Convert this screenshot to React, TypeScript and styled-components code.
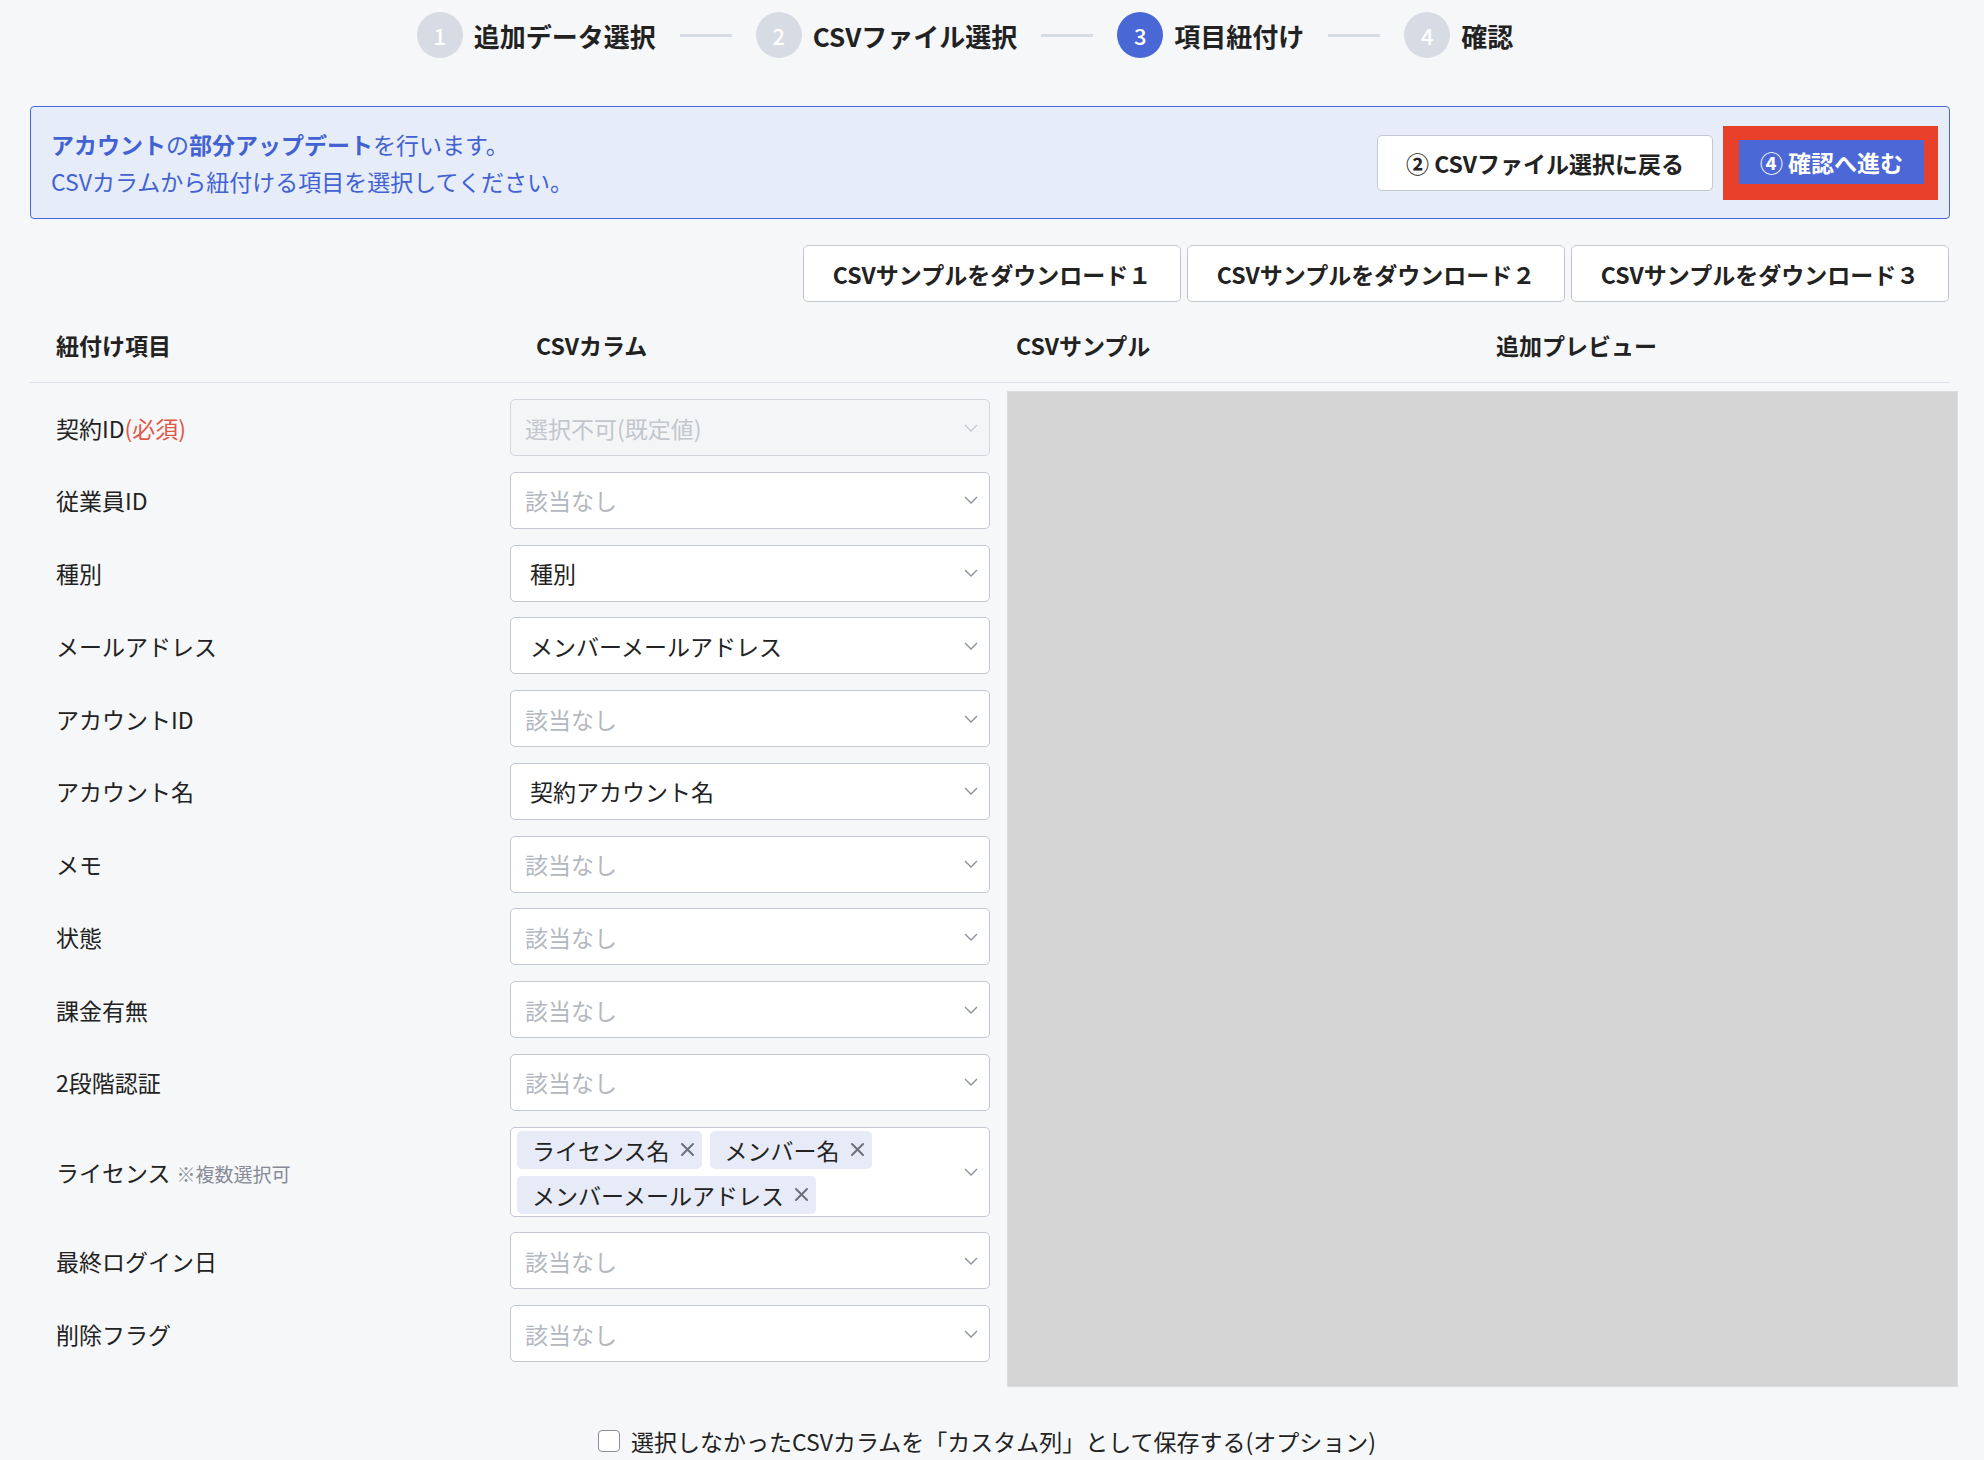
import React from 'react';
import styled, { createGlobalStyle } from 'styled-components';

const GlobalStyle = createGlobalStyle`
  body {
    margin: 0;
    background: #f6f7f9;
    font-family: "Noto Sans CJK JP", "Noto Sans", sans-serif;
    color: #222;
  }
`;

const Page = styled.div`
  width: 1920px;
  padding-left: 30px;
`;

// ステッパー
const Stepper = styled.div`
  display: flex;
  align-items: center;
  justify-content: center;
  padding: 12px 50px 0 0;
  height: 46px;
`;

const Step = styled.div`
  display: flex;
  align-items: center;
  gap: 11px;
`;

const StepNum = styled.span<{ $active?: boolean }>`
  width: 46px;
  height: 46px;
  border-radius: 50%;
  background: ${p => (p.$active ? '#4a67d6' : '#d6dbe4')};
  color: #fff;
  font-size: 22px;
  font-weight: 500;
  display: flex;
  align-items: center;
  justify-content: center;
`;

const StepLabel = styled.span`
  font-size: 26px;
  font-weight: 700;
  color: #222;
`;

const StepLine = styled.span`
  width: 52px;
  height: 3px;
  background: #d6dbe4;
  margin: 0 24px;
`;

// 案内ボックス
const InfoBox = styled.div`
  margin-top: 48px;
  height: 113px;
  box-sizing: border-box;
  border: 1px solid #4a67d6;
  border-radius: 4px;
  background: #e7edf8;
  display: flex;
  align-items: center;
  justify-content: space-between;
  padding: 0 11px 0 20px;
`;

const InfoText = styled.div`
  color: #4262d2;
  font-size: 23px;
  line-height: 37px;
  b {
    font-weight: 700;
  }
`;

const InfoActions = styled.div`
  display: flex;
  align-items: center;
  gap: 10px;
`;

const Button = styled.button<{ $w?: number; $h?: number }>`
  width: ${p => p.$w ?? 378}px;
  height: ${p => p.$h ?? 57}px;
  background: #fff;
  border: 1px solid #c3c7d2;
  border-radius: 5px;
  font-family: inherit;
  font-size: 23px;
  font-weight: 700;
  color: #222;
  padding: 0;
  display: flex;
  align-items: center;
  justify-content: center;
`;

const Highlight = styled.div`
  background: #e8402b;
  padding: 14px 14px 16px 16px;
`;

const PrimaryButton = styled.button`
  width: 185px;
  height: 44px;
  border: none;
  background: #4c68d7;
  color: #fff;
  font-family: inherit;
  font-size: 23px;
  font-weight: 700;
  padding: 0;
`;

const DownloadBar = styled.div`
  display: flex;
  justify-content: flex-end;
  gap: 6px;
  margin-top: 26px;
  padding-right: 1px;
`;

// テーブル
const HeadRow = styled.div`
  display: grid;
  grid-template-columns: repeat(4, 480px);
  height: 81px;
  box-sizing: border-box;
  padding-top: 5px;
  align-items: center;
  border-bottom: 1px solid #dde0e8;
`;

const HeadCell = styled.div`
  padding-left: 26px;
  font-size: 23px;
  font-weight: 700;
  color: #222;
`;

const Body = styled.div`
  display: flex;
  margin-top: 8px;
`;

const Fields = styled.div`
  width: 960px;
  flex-shrink: 0;
  display: flex;
  flex-direction: column;
  gap: 15.75px;
  padding: 8px 0 25px;
`;

const Row = styled.div`
  display: grid;
  grid-template-columns: 480px 480px;
  align-items: center;
`;

const Label = styled.div`
  padding-left: 26px;
  font-size: 23px;
  color: #222;
  display: flex;
  align-items: baseline;
`;

const Required = styled.span`
  color: #e0574a;
`;

const Note = styled.span`
  font-size: 19px;
  color: #858a96;
  margin-left: 6px;
`;

const Select = styled.div<{ $disabled?: boolean; $tall?: boolean }>`
  position: relative;
  box-sizing: border-box;
  min-height: ${p => (p.$tall ? 90 : 57)}px;
  border: 1px solid ${p => (p.$disabled ? '#d3d6de' : '#c3c7d2')};
  border-radius: 5px;
  background: ${p => (p.$disabled ? '#f4f5f7' : '#fff')};
  display: flex;
  align-items: center;
  padding-right: 44px;
`;

const SelectText = styled.span<{ $muted?: boolean; $disabled?: boolean }>`
  font-size: 23px;
  padding-left: ${p => (p.$muted ? 14 : 19)}px;
  color: ${p => (p.$disabled ? '#c3c6cd' : p.$muted ? '#b3b7c0' : '#222')};
`;

const Chevron = styled.svg<{ $disabled?: boolean }>`
  position: absolute;
  right: 11px;
  top: 50%;
  margin-top: -4px;
  stroke: ${p => (p.$disabled ? '#c6c9d1' : '#8a8f9c')};
`;

const TagList = styled.div`
  display: flex;
  flex-wrap: wrap;
  gap: 7px 8px;
  padding: 3px 0 2px 6px;
`;

const Tag = styled.span`
  height: 38px;
  display: flex;
  align-items: center;
  background: #e6ebf7;
  border-radius: 5px;
  padding: 0 7px 0 15px;
  font-size: 23px;
  color: #222;
  svg {
    margin-left: 10px;
  }
`;

const Preview = styled.div`
  flex-shrink: 0;
  margin-left: 17px;
  width: 951px;
  box-sizing: border-box;
  background: #d5d5d5;
  border: 1px solid #dcdcdc;
`;

const Footer = styled.label`
  display: flex;
  align-items: center;
  justify-content: center;
  gap: 11px;
  margin-top: 37px;
  font-size: 23px;
  color: #222;
`;

const CheckBox = styled.span`
  width: 20px;
  height: 20px;
  border: 1.5px solid #8d8f94;
  border-radius: 4px;
  background: #fff;
  margin-left: -6px;
`;

type Field = {
  label: string;
  required?: boolean;
  note?: string;
  value?: string;
  placeholder?: string;
  disabled?: boolean;
  tags?: string[];
};

const fields: Field[] = [
  { label: '契約ID', required: true, placeholder: '選択不可(既定値)', disabled: true },
  { label: '従業員ID', placeholder: '該当なし' },
  { label: '種別', value: '種別' },
  { label: 'メールアドレス', value: 'メンバーメールアドレス' },
  { label: 'アカウントID', placeholder: '該当なし' },
  { label: 'アカウント名', value: '契約アカウント名' },
  { label: 'メモ', placeholder: '該当なし' },
  { label: '状態', placeholder: '該当なし' },
  { label: '課金有無', placeholder: '該当なし' },
  { label: '2段階認証', placeholder: '該当なし' },
  { label: 'ライセンス', note: '※複数選択可', tags: ['ライセンス名', 'メンバー名', 'メンバーメールアドレス'] },
  { label: '最終ログイン日', placeholder: '該当なし' },
  { label: '削除フラグ', placeholder: '該当なし' },
];

const steps = ['追加データ選択', 'CSVファイル選択', '項目紐付け', '確認'];

const CloseIcon = () => (
  <svg width="15" height="15" viewBox="0 0 15 15" stroke="#6b6f78" strokeWidth="2" strokeLinecap="round">
    <line x1="2" y1="2" x2="13" y2="13" />
    <line x1="13" y1="2" x2="2" y2="13" />
  </svg>
);

function FieldSelect({ f }: { f: Field }) {
  return (
    <Select $disabled={f.disabled} $tall={!!f.tags}>
      {f.tags ? (
        <TagList>
          {f.tags.map(t => (
            <Tag key={t}>
              {t}
              <CloseIcon />
            </Tag>
          ))}
        </TagList>
      ) : f.value ? (
        <SelectText>{f.value}</SelectText>
      ) : (
        <SelectText $muted $disabled={f.disabled}>{f.placeholder}</SelectText>
      )}
      <Chevron $disabled={f.disabled} width="14" height="8" viewBox="0 0 14 8" fill="none" strokeWidth="1.3">
        <polyline points="1,1 7,7 13,1" />
      </Chevron>
    </Select>
  );
}

export default function App() {
  return (
    <Page>
      <GlobalStyle />
      <Stepper>
        {steps.map((s, i) => (
          <React.Fragment key={s}>
            {i > 0 && <StepLine />}
            <Step>
              <StepNum $active={i === 2}>{i + 1}</StepNum>
              <StepLabel>{s}</StepLabel>
            </Step>
          </React.Fragment>
        ))}
      </Stepper>

      <InfoBox>
        <InfoText>
          <div><b>アカウント</b>の<b>部分アップデート</b>を行います。</div>
          <div>CSVカラムから紐付ける項目を選択してください。</div>
        </InfoText>
        <InfoActions>
          <Button $w={336} $h={56}>② CSVファイル選択に戻る</Button>
          <Highlight>
            <PrimaryButton>④ 確認へ進む</PrimaryButton>
          </Highlight>
        </InfoActions>
      </InfoBox>

      <DownloadBar>
        <Button>CSVサンプルをダウンロード１</Button>
        <Button>CSVサンプルをダウンロード２</Button>
        <Button>CSVサンプルをダウンロード３</Button>
      </DownloadBar>

      <HeadRow>
        <HeadCell>紐付け項目</HeadCell>
        <HeadCell>CSVカラム</HeadCell>
        <HeadCell>CSVサンプル</HeadCell>
        <HeadCell>追加プレビュー</HeadCell>
      </HeadRow>

      <Body>
        <Fields>
          {fields.map(f => (
            <Row key={f.label}>
              <Label>
                {f.label}
                {f.required && <Required>(必須)</Required>}
                {f.note && <Note>{f.note}</Note>}
              </Label>
              <FieldSelect f={f} />
            </Row>
          ))}
        </Fields>
        <Preview />
      </Body>

      <Footer>
        <CheckBox />
        選択しなかったCSVカラムを「カスタム列」として保存する(オプション)
      </Footer>
    </Page>
  );
}
